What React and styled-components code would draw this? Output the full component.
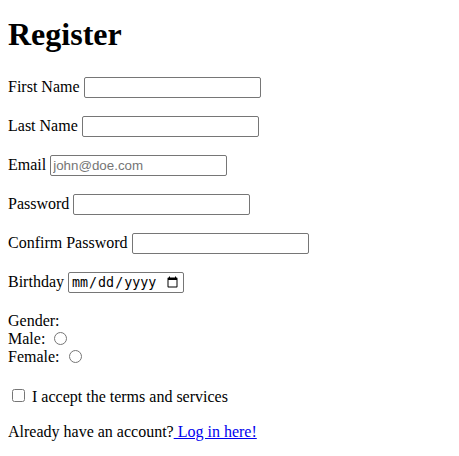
import React from 'react';
import styled, { createGlobalStyle } from 'styled-components';

const GlobalStyle = createGlobalStyle`
	body {
		margin: 8px;
		font-family: 'Liberation Serif', 'Times New Roman', serif;
		font-size: 16px;
		color: #000;
		background: #fff;
	}
`;

const Title = styled.h1`
	font-size: 2em;
	font-weight: bold;
	margin: 8px 0 23px;
`;

const Row = styled.p`
	margin: ${({ $top }) => $top || 16}px 0 16px;
`;

const TextInput = styled.input`
	font-family: 'Liberation Sans', Arial, sans-serif;
	font-size: 13.333px;
	width: 177px;
	height: 21px;
	margin: 1px 0;
	box-sizing: border-box;
	padding: 1px 2px;
	border: 1px solid #767676;
	border-radius: 2px;
	&::placeholder {
		color: #757575;
	}
`;

const DateInput = styled(TextInput)`
	font-family: 'DejaVu Sans Mono', 'Liberation Mono', monospace;
	font-size: 13.333px;
	width: 116px;
`;

const Choice = styled.input`
	margin: 0 3px 0 5px;
	vertical-align: -1px;
`;

const Check = styled.input`
	margin: 3px 3px 3px 4px;
`;

const Link = styled.a`
	color: #0000ee;
	text-decoration: underline;
`;

const App = () => {
	return (
		<>
			<GlobalStyle />
			<form>
				<Title>Register</Title>
				<Row>
					First Name <TextInput type="text" />
				</Row>
				<Row>
					Last Name <TextInput type="text" />
				</Row>
				<Row>
					Email <TextInput type="email" placeholder="john@doe.com" />
				</Row>
				<Row>
					Password <TextInput type="password" />
				</Row>
				<Row>
					Confirm Password <TextInput type="password" />
				</Row>
				<Row>
					Birthday <DateInput type="date" />
				</Row>
				<Row $top={18}>
					Gender:
					<br />
					Male: <Choice type="radio" name="gender" />
					<br />
					Female: <Choice type="radio" name="gender" />
				</Row>
				<Row $top={20}>
					<Check type="checkbox" /> I accept the terms and services
				</Row>
				<Row $top={17}>
					Already have an account?<Link href="#"> Log in here!</Link>
				</Row>
			</form>
		</>
	);
};

export default App;
